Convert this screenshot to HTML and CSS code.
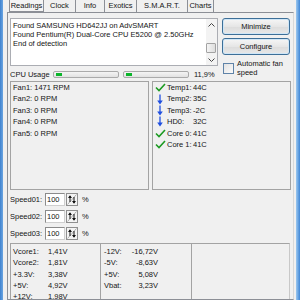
FILE: index.html
```html
<!DOCTYPE html>
<html>
<head>
<meta charset="utf-8">
<link rel="stylesheet" href="styles.css">
</head>
<body>
<div class="window">
  <div class="frame-left"></div>
  <div class="client">
    <div class="tabs">
      <div class="tab tab-readings">Readings</div>
      <div class="tab tab-clock">Clock</div>
      <div class="tab tab-info">Info</div>
      <div class="tab tab-exotics">Exotics</div>
      <div class="tab tab-smart">S.M.A.R.T.</div>
      <div class="tab tab-charts">Charts</div>
    </div>
    <div class="panel">
      <div class="top">
        <div class="left-col">
          <div class="log">
            <div class="log-text">
              <div>Found SAMSUNG HD642JJ on AdvSMART</div>
              <div>Found Pentium(R) Dual-Core CPU E5200 @ 2.50GHz</div>
              <div>End of detection</div>
            </div>
            <div class="scrollbar">
              <div class="sb-btn"><svg width="7" height="4" viewBox="0 0 7 4"><path d="M0.5 3.5 L3.5 0.5 L6.5 3.5" fill="none" stroke="#444" stroke-width="1"/></svg></div>
              <div class="sb-track"><div class="sb-thumb"></div></div>
              <div class="sb-btn"><svg width="7" height="4" viewBox="0 0 7 4"><path d="M0.5 0.5 L3.5 3.5 L6.5 0.5" fill="none" stroke="#444" stroke-width="1"/></svg></div>
            </div>
          </div>
          <div class="cpu-row">
            <span class="cpu-label">CPU Usage</span>
            <div class="bar"><div class="chunk"></div></div>
            <div class="bar"><div class="chunk"></div></div>
            <span class="cpu-pct">11,9%</span>
          </div>
        </div>
        <div class="right-col">
          <button class="btn">Minimize</button>
          <button class="btn">Configure</button>
          <div class="check-row">
            <span class="checkbox"></span>
            <span class="check-text">Automatic fan<br>speed</span>
          </div>
        </div>
      </div>
      <div class="lists">
        <div class="listbox fans">
          <div>Fan1: 1471 RPM</div>
          <div>Fan2: 0 RPM</div>
          <div>Fan3: 0 RPM</div>
          <div>Fan4: 0 RPM</div>
          <div>Fan5: 0 RPM</div>
        </div>
        <div class="listbox temps">
          <div class="temp-row"><svg class="ico" width="11" height="9" viewBox="0 0 11 9"><path d="M1 4.5 L4 7.5 L10 1" fill="none" stroke="#1c9a22" stroke-width="1.6"/></svg><span>Temp1:</span><span>44C</span></div>
          <div class="temp-row"><svg class="ico" width="11" height="11" viewBox="0 0 11 11"><path d="M5 0.5 V8" stroke="#1f4fe0" stroke-width="1.3"/><path d="M2.2 6.5 L5 10.5 L7.8 6.5 Z" fill="#1f4fe0"/></svg><span>Temp2:</span><span>35C</span></div>
          <div class="temp-row"><svg class="ico" width="11" height="11" viewBox="0 0 11 11"><path d="M5 0.5 V8" stroke="#1f4fe0" stroke-width="1.3"/><path d="M2.2 6.5 L5 10.5 L7.8 6.5 Z" fill="#1f4fe0"/></svg><span>Temp3:</span><span>-2C</span></div>
          <div class="temp-row"><svg class="ico" width="11" height="11" viewBox="0 0 11 11"><path d="M5 0.5 V8" stroke="#1f4fe0" stroke-width="1.3"/><path d="M2.2 6.5 L5 10.5 L7.8 6.5 Z" fill="#1f4fe0"/></svg><span>HD0:</span><span>32C</span></div>
          <div class="temp-row"><svg class="ico" width="11" height="9" viewBox="0 0 11 9"><path d="M1 4.5 L4 7.5 L10 1" fill="none" stroke="#1c9a22" stroke-width="1.6"/></svg><span>Core 0:</span><span>41C</span></div>
          <div class="temp-row"><svg class="ico" width="11" height="9" viewBox="0 0 11 9"><path d="M1 4.5 L4 7.5 L10 1" fill="none" stroke="#1c9a22" stroke-width="1.6"/></svg><span>Core 1:</span><span>41C</span></div>
        </div>
      </div>
      <div class="speeds">
        <div class="speed-row">
          <span class="speed-label">Speed01:</span>
          <span class="num">100</span>
          <svg class="spin" width="12" height="13" viewBox="0 0 12 13"><rect x="0.5" y="0.5" width="11" height="12" fill="#f4f4f4" stroke="#8f8f8f"/><path d="M1.5 11.5 L10.5 1.5" stroke="#9a9a9a" stroke-width="0.8"/><path d="M4 3 V9" stroke="#111" stroke-width="1"/><path d="M2 5 L4 2.2 L6 5 Z" fill="#111"/><path d="M8 4 V10" stroke="#111" stroke-width="1"/><path d="M6 8 L8 10.8 L10 8 Z" fill="#111"/></svg>
          <span class="pct">%</span>
        </div>
        <div class="speed-row">
          <span class="speed-label">Speed02:</span>
          <span class="num">100</span>
          <svg class="spin" width="12" height="13" viewBox="0 0 12 13"><rect x="0.5" y="0.5" width="11" height="12" fill="#f4f4f4" stroke="#8f8f8f"/><path d="M1.5 11.5 L10.5 1.5" stroke="#9a9a9a" stroke-width="0.8"/><path d="M4 3 V9" stroke="#111" stroke-width="1"/><path d="M2 5 L4 2.2 L6 5 Z" fill="#111"/><path d="M8 4 V10" stroke="#111" stroke-width="1"/><path d="M6 8 L8 10.8 L10 8 Z" fill="#111"/></svg>
          <span class="pct">%</span>
        </div>
        <div class="speed-row">
          <span class="speed-label">Speed03:</span>
          <span class="num">100</span>
          <svg class="spin" width="12" height="13" viewBox="0 0 12 13"><rect x="0.5" y="0.5" width="11" height="12" fill="#f4f4f4" stroke="#8f8f8f"/><path d="M1.5 11.5 L10.5 1.5" stroke="#9a9a9a" stroke-width="0.8"/><path d="M4 3 V9" stroke="#111" stroke-width="1"/><path d="M2 5 L4 2.2 L6 5 Z" fill="#111"/><path d="M8 4 V10" stroke="#111" stroke-width="1"/><path d="M6 8 L8 10.8 L10 8 Z" fill="#111"/></svg>
          <span class="pct">%</span>
        </div>
      </div>
      <div class="volts">
        <div class="vcol vcol1">
          <span>Vcore1:</span><span>1,41V</span>
          <span>Vcore2:</span><span>1,81V</span>
          <span>+3.3V:</span><span>3,38V</span>
          <span>+5V:</span><span>4,92V</span>
          <span>+12V:</span><span>1,98V</span>
        </div>
        <div class="vcol vcol2">
          <span>-12V:</span><span class="val">-16,72V</span>
          <span>-5V:</span><span class="val">-8,63V</span>
          <span>+5V:</span><span class="val">5,08V</span>
          <span>Vbat:</span><span class="val">3,23V</span>
        </div>
        <div class="vcol vcol3"></div>
      </div>
    </div>
  </div>
  <div class="frame-right"></div>
</div>
</body>
</html>
```

FILE: styles.css
```css
* { box-sizing: border-box; margin: 0; padding: 0; }
html, body { width: 300px; height: 300px; overflow: hidden; }
body {
  font-family: "Liberation Sans", Arial, sans-serif;
  font-size: 7.5px;
  color: #151515;
  background: #f0f0f0;
}
.window { display: flex; height: 300px; }
.frame-left { width: 3px; background: linear-gradient(90deg, #3f82cf, #6aa5e2); }
.frame-right { width: 4px; background: linear-gradient(90deg, #9cc8f0, #3f86d6); }
.client { flex: 1; display: flex; flex-direction: column; overflow: hidden; background: #f0f0f0; }

.tabs { display: flex; height: 12px; padding-left: 6px; }
.tab {
  height: 12px;
  line-height: 12px;
  text-align: center;
  white-space: nowrap;
  border-right: 1px solid #8c8f96;
}
.tab-readings {
  width: 35px;
  border: 1px solid #8c8f96;
  border-top: none;
  line-height: 11px;
  background: #f4f4f4;
}
.tab-clock { width: 32px; }
.tab-info { width: 29px; }
.tab-exotics { width: 32px; }
.tab-smart { width: 51px; }
.tab-charts { width: 26px; }

.panel {
  flex: 1;
  margin: 0 2px 0 4px;
  border: 1px solid #8c8f96;
  border-right-color: #d8d8d8;
  padding: 5px 2px 0 2px;
  overflow: hidden;
}

.top { display: grid; grid-template-columns: 208px 68px; column-gap: 4px; }
.left-col { display: flex; flex-direction: column; gap: 3px; }
.log {
  height: 48px;
  border: 1px solid #abadb3;
  background: #fff;
  display: flex;
}
.log-text { flex: 1; padding: 1.5px 2px; line-height: 9px; white-space: nowrap; overflow: hidden; }
.scrollbar { width: 11px; display: flex; flex-direction: column; background: #f3f3f3; }
.sb-btn { height: 11px; display: flex; align-items: center; justify-content: center; }
.sb-track { flex: 1; padding-top: 13px; }
.sb-thumb {
  height: 10px;
  margin: 0 1px 0 0;
  border: 1px solid #a3a3a3;
  border-radius: 1px;
  background: linear-gradient(90deg, #f4f4f4, #dedede);
}

.cpu-row { display: flex; align-items: center; height: 10px; }
.cpu-label { width: 43px; white-space: nowrap; }
.bar {
  width: 66px;
  height: 7px;
  border: 1px solid #aaaaaa;
  border-radius: 2px;
  background: linear-gradient(#f4f4f4, #e2e2e2);
  display: flex;
  align-items: center;
  padding-left: 2px;
}
.bar + .bar { margin-left: 4px; }
.chunk { width: 6px; height: 3px; background: #0bb52a; }
.cpu-pct { margin-left: 5px; white-space: nowrap; }

.right-col { display: flex; flex-direction: column; gap: 3px; }
.btn {
  height: 17px;
  font: inherit;
  color: #151515;
  border: 1px solid #3d6f98;
  border-radius: 3px;
  background: linear-gradient(#f6f6f6, #e6e6e6 50%, #dcdcdc 51%, #e8e8e8);
  box-shadow: inset 0 0 0 1px #cfe6f7;
}
.check-row { display: flex; align-items: center; gap: 3px; height: 20px; padding-left: 1px; }
.checkbox {
  width: 11px;
  height: 11px;
  border: 1px solid #5f83a8;
  background: linear-gradient(135deg, #e2e2e2, #fbfbfb);
}
.check-text { line-height: 9.5px; }

.lists {
  display: grid;
  grid-template-columns: 1fr 1fr;
  gap: 3px;
  margin-top: 2px;
  height: 109px;
}
.listbox {
  border: 1px solid #a3a3a3;
  background: #f0f0f0;
  line-height: 11.4px;
  padding: 0 2px;
  white-space: nowrap;
}
.temp-row { display: grid; grid-template-columns: 11px 25px auto; column-gap: 1px; align-items: center; height: 11.4px; }
.ico { display: block; }

.speeds { display: flex; flex-direction: column; gap: 4px; margin-top: 3px; }
.speed-row { display: flex; align-items: center; height: 13px; }
.speed-label { width: 35px; white-space: nowrap; }
.num {
  width: 20px;
  height: 13px;
  line-height: 11px;
  border: 1px solid #8b8b8b;
  border-right-color: #cfcfcf;
  border-bottom-color: #cfcfcf;
  background: #fff;
  padding-left: 1px;
}
.spin { display: block; margin-left: 1px; }
.pct { margin-left: 4px; }

.volts {
  display: grid;
  grid-template-columns: 89px 91px 1fr;
  width: 280px;
  height: 70px;
  margin-top: 3px;
  border: 1px solid #a3a3a3;
  border-right-color: #c8c8c8;
}
.vcol { display: grid; align-content: start; line-height: 11.3px; padding-top: 2px; white-space: nowrap; }
.vcol1 { grid-template-columns: 35px auto; padding-left: 2px; }
.vcol2 { grid-template-columns: 24px 30px; padding-left: 3px; border-left: 1px solid #a3a3a3; }
.vcol2 .val { text-align: right; }
.vcol3 { border-left: 1px solid #a3a3a3; }
```
